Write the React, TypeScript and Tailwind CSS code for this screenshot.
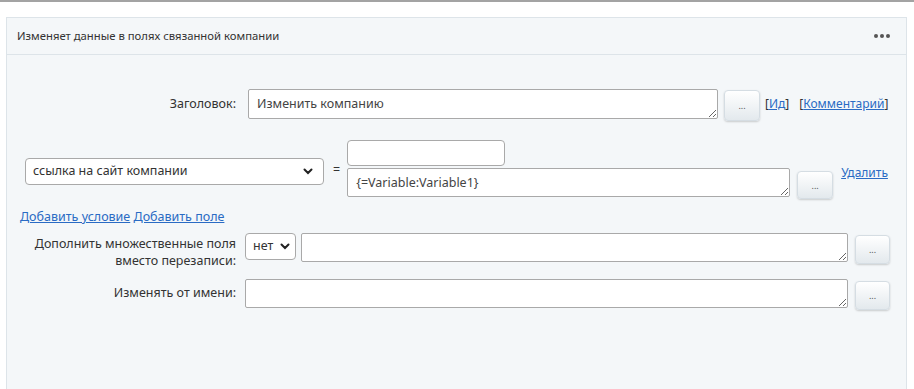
import React from 'react';

const DotsButton: React.FC<{ className?: string }> = ({ className = '' }) => (
  <button
    className={`flex items-center justify-center rounded-[4px] border border-[#d5dde3] bg-gradient-to-b from-white to-[#e3e9ed] shadow-[0_1px_2px_rgba(0,0,0,0.18)] text-[9px] leading-none text-[#555] ${className}`}
  >
    ...
  </button>
);

const Area: React.FC<{ className?: string; value?: string }> = ({ className = '', value = '' }) => (
  <textarea
    readOnly
    value={value}
    className={`resize-y rounded-[2px] border border-[#a9a9a9] bg-white px-[8px] py-[5px] text-[12.5px] leading-[17px] text-[#444] outline-none ${className}`}
  />
);

const Chevron = () => (
  <svg width="10" height="7" viewBox="0 0 10 7" className="shrink-0">
    <path d="M1.5 1.5 L5 5 L8.5 1.5" fill="none" stroke="#222" strokeWidth="2" strokeLinecap="round" />
  </svg>
);

export default function App() {
  return (
    <div className="h-[389px] w-[914px] overflow-hidden bg-white font-['Noto_Sans',sans-serif] text-[#333]">
      <div className="h-[2px] bg-[#a3a3a3]" />
      <div className="ml-[6px] mt-[15px] h-[400px] w-[901px] border border-[#dde4e9] bg-[#f4f7f9]">
        {/* header */}
        <div className="flex h-[37px] items-center justify-between border-b border-[#dde4e9] bg-[#f4f7f9] pl-[10px] pr-[16px]">
          <span className="text-[11.3px] text-[#333]">Изменяет данные в полях связанной компании</span>
          <span className="flex gap-[2px]">
            <span className="h-[4px] w-[4px] rounded-full bg-[#555]" />
            <span className="h-[4px] w-[4px] rounded-full bg-[#555]" />
            <span className="h-[4px] w-[4px] rounded-full bg-[#555]" />
          </span>
        </div>

        {/* title row */}
        <div className="mt-[34px] flex items-start">
          <div className="w-[229px] pt-[6px] text-right text-[12.5px]">Заголовок:</div>
          <Area className="ml-[12px] h-[30px] w-[470px]" value="Изменить компанию" />
          <DotsButton className="ml-[6px] mt-[1px] h-[31px] w-[36px]" />
          <div className="ml-[5px] mt-[6px] flex gap-[10px] text-[12px]">
            <span>
              [<a className="text-[#2a6bc4] underline">Ид</a>]
            </span>
            <span>
              [<a className="text-[#2a6bc4] underline">Комментарий</a>]
            </span>
          </div>
        </div>

        {/* condition row */}
        <div className="mt-[19px] flex items-start pl-[18px]">
          <div className="mt-[18px] flex h-[27px] w-[299px] items-center justify-between rounded-[4px] border border-[#a9a9a9] bg-white pl-[7px] pr-[10px] text-[12.5px]">
            <span>ссылка на сайт компании</span>
            <Chevron />
          </div>
          <span className="ml-[9px] mt-[21px] text-[12.5px]">=</span>
          <div className="ml-[7px] flex flex-col gap-[2px]">
            <div className="h-[26px] w-[158px] rounded-[4px] border border-[#a9a9a9] bg-white" />
            <Area className="h-[29px] w-[443px] px-[4px]" value="{=Variable:Variable1}" />
          </div>
          <DotsButton className="ml-[7px] mt-[31px] h-[28px] w-[36px]" />
          <a className="ml-[8px] mt-[24px] text-[12px] text-[#2a6bc4] underline">Удалить</a>
        </div>

        {/* links */}
        <div className="mt-[9px] pl-[13px] text-[12.5px]">
          <a className="text-[#2a6bc4] underline">Добавить условие</a>{' '}
          <a className="text-[#2a6bc4] underline">Добавить поле</a>
        </div>

        {/* append row */}
        <div className="mt-[6px] flex items-start">
          <div className="w-[229px] pt-[2px] text-right text-[12.5px] leading-[17px]">
            Дополнить множественные поля
            <br />
            вместо перезаписи:
          </div>
          <div className="ml-[9px] flex h-[27px] w-[51px] items-center justify-between rounded-[4px] border border-[#a9a9a9] bg-white pl-[7px] pr-[5px] text-[12.5px]">
            <span>нет</span>
            <Chevron />
          </div>
          <Area className="ml-[5px] h-[29px] w-[547px]" />
          <DotsButton className="ml-[7px] mt-[2px] h-[29px] w-[35px]" />
        </div>

        {/* author row */}
        <div className="mt-[10px] flex items-start">
          <div className="w-[229px] pt-[5px] text-right text-[12.5px]">Изменять от имени:</div>
          <Area className="ml-[9px] h-[29px] w-[603px]" />
          <DotsButton className="ml-[7px] mt-[2px] h-[29px] w-[35px]" />
        </div>
      </div>
    </div>
  );
}
